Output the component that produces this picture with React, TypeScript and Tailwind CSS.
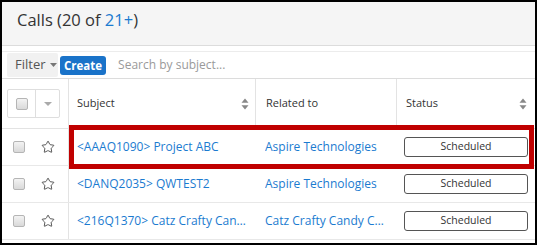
import { Star } from "lucide-react";

const rows = [
  { subject: "<AAAQ1090> Project ABC", related: "Aspire Technologies" },
  { subject: "<DANQ2035> QWTEST2", related: "Aspire Technologies" },
  { subject: "<216Q1370> Catz Crafty Candy Company call", related: "Catz Crafty Candy Company" },
];

const SortIcon = () => (
  <svg width="8" height="12" viewBox="0 0 8 12" className="text-[#888]">
    <path d="M4 0.5 L7.5 4.8 L0.5 4.8 Z" fill="currentColor" />
    <path d="M4 11.5 L7.5 7.2 L0.5 7.2 Z" fill="currentColor" />
  </svg>
);

const Checkbox = () => (
  <div className="w-[12px] h-[12px] rounded-[2px] border border-[#b5b5b5] bg-gradient-to-b from-[#f3f3f3] to-[#d9d9d9]" />
);

const App = () => {
  return (
    <div
      className="relative w-[537px] h-[245px] border-2 border-black overflow-hidden bg-white text-[#333]"
      style={{ fontFamily: '"Open Sans", "Liberation Sans", sans-serif' }}
    >
      {/* Title bar */}
      <div className="h-[44px] bg-[#f5f5f5] border-b border-[#dcdcdc] pl-[15px] pt-[6px]">
        <h1 className="text-[16.5px] leading-[24px] text-[#333]">
          Calls (20 of <span className="text-[#1b7bd0]">21+</span>)
        </h1>
      </div>
      <div className="h-[6px] border-b border-[#ececec]" />

      {/* Toolbar */}
      <div className="h-[27px] border-b border-[#dcdcdc] flex items-center pl-[5px] gap-[2px]">
        <div className="h-[24px] w-[51px] bg-[#f1f1f1] rounded-[2px] flex items-center pl-[8px] gap-[4px] text-[13px] text-[#555]">
          Filter
          <svg width="7" height="4" viewBox="0 0 7 4">
            <path d="M0 0 L7 0 L3.5 4 Z" fill="#777" />
          </svg>
        </div>
        <button className="h-[19px] px-[4px] bg-[#1a73c9] text-white text-[11.5px] font-bold rounded-[3px] leading-[19px]">
          Create
        </button>
        <span className="ml-[10px] text-[12px] text-[#9a9a9a]">Search by subject...</span>
      </div>

      {/* Table header */}
      <div className="grid grid-cols-[67px_187px_141px_1fr] h-[50px] border-b border-[#e3e3e3]">
        <div className="border-r border-[#e3e3e3] flex items-center pl-[5px]">
          <div className="flex h-[29px] w-[53px] border border-[#dedede] rounded-[2px]">
            <div className="w-[28px] border-r border-[#dedede] flex items-center justify-center">
              <Checkbox />
            </div>
            <div className="flex-1 flex items-center justify-center">
              <svg width="8" height="4" viewBox="0 0 8 4">
                <path d="M0 0 L8 0 L4 4 Z" fill="#aaa" />
              </svg>
            </div>
          </div>
        </div>
        <div className="border-r border-[#e3e3e3] flex items-center justify-between pl-[8px] pr-[6px] text-[11px]">
          Subject
          <SortIcon />
        </div>
        <div className="border-r border-[#e3e3e3] flex items-center pl-[10px] text-[11px]">
          Related to
        </div>
        <div className="flex items-center justify-between pl-[9px] pr-[8px] text-[11px]">
          Status
          <SortIcon />
        </div>
      </div>

      {/* Rows */}
      {rows.map((row, idx) => (
        <div
          key={idx}
          className="grid grid-cols-[67px_187px_141px_1fr] h-[37px] border-b border-[#e8e8e8]"
        >
          <div className="border-r border-[#e3e3e3] flex items-center pl-[11px] gap-[16px]">
            <Checkbox />
            <Star size={14} strokeWidth={1.4} className="text-[#333]" />
          </div>
          <div className="flex items-center pl-[8px] pr-[8px] text-[12px] text-[#1b7bd0] min-w-0">
            <span className="truncate">{row.subject}</span>
          </div>
          <div className="flex items-center pl-[9px] pr-[12px] text-[12px] text-[#1b7bd0] min-w-0">
            <span className="truncate">{row.related}</span>
          </div>
          <div className="flex items-center pl-[7px]">
            <div className="w-[124px] h-[20px] border border-[#555] rounded-[3px] flex items-center justify-center text-[10.5px] text-[#333]">
              Scheduled
            </div>
          </div>
        </div>
      ))}

      {/* Highlight annotation */}
      <div className="absolute left-[67px] top-[123px] w-[465px] h-[44px] border-[5px] border-[#c00000] pointer-events-none" />
    </div>
  );
};

export default App;
